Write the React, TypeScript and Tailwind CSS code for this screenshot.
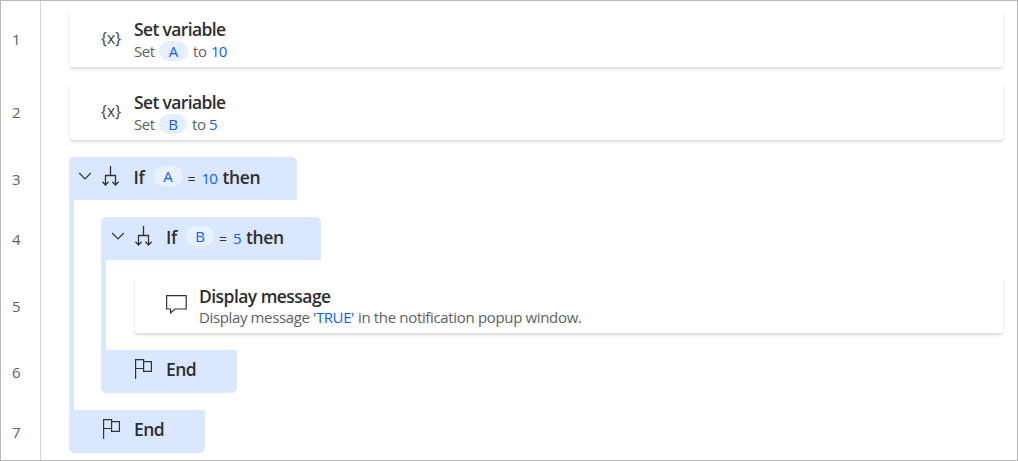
import type { ReactNode } from 'react';

const LineNumber = ({ n, className }: { n: number; className: string }) => (
  <div className={`flex items-center pb-[2px] pl-[11px] text-[15px] leading-none tracking-[-0.4px] text-[#5f5f5f] ${className}`}>{n}</div>
);

const Pill = ({ children, className }: { children: ReactNode; className: string }) => (
  <span className={`flex h-[20px] shrink-0 items-center justify-center rounded-full pt-px text-[15px] leading-none text-[#0b60fa] ${className}`}>
    {children}
  </span>
);

const Chevron = () => (
  <svg className="w-[14px] shrink-0" height="8" viewBox="0 0 14 8" fill="none" stroke="#333" strokeWidth="1.2">
    <path d="M1.2 1 7 6.8 12.8 1" />
  </svg>
);

const Branch = () => (
  <svg className="ml-[10px] w-[18px] shrink-0" height="20" viewBox="0 0 18 20" fill="none" stroke="#333" strokeWidth="1.3">
    <path d="M8.5 0V9.5M3.5 18.5V9.5H13.5V18.5M.4 15.8 3.5 19 6.6 15.8M10.4 15.8 13.5 19 16.6 15.8" />
  </svg>
);

const Flag = () => (
  <svg className="w-[18px] shrink-0" height="20" viewBox="0 0 18 20" fill="none" stroke="#333" strokeWidth="1.2">
    <path d="M.6 20V.6H8.6V9.5H.6M8.6 2.6H16.4V12.4H8.6V9.5" />
  </svg>
);

const Message = () => (
  <svg className="ml-[31px] w-[21px] shrink-0" height="19" viewBox="0 0 21 19" fill="none" stroke="#333" strokeWidth="1.2">
    <path d="M.6.7H20.2V14H9L4.6 17.9V14H.6Z" />
  </svg>
);

const Card = ({ icon, title, children, className }: { icon: ReactNode; title: ReactNode; children: ReactNode; className: string }) => (
  <div className={`flex h-[57px] shrink-0 rounded-[3px] bg-white shadow-[0_2px_3px_rgba(0,0,0,0.14)] ${className}`}>
    <div className="flex w-[64px] shrink-0 items-center">{icon}</div>
    <div className="flex flex-col pt-[9px]">
      <div className="h-[22px] text-[17.5px] leading-[22px] font-semibold whitespace-nowrap text-[#2e2e2e]">{title}</div>
      <div className="flex h-[20px] items-center text-[15px] leading-[20px] whitespace-nowrap text-[#616161]">{children}</div>
    </div>
  </div>
);

const Variable = () => <span className="ml-[31px] text-[15.5px] tracking-[0.1px] text-[#3b3b3b]">{'{x}'}</span>;

const SetCard = ({ name, value, wide, className }: { name: string; value: string; wide: boolean; className: string }) => (
  <Card className={className} icon={<Variable />} title={<span className="block leading-[20px] tracking-[-0.65px]">Set variable</span>}>
    <span className="w-[25px] tracking-[-0.4px]">Set</span>
    <Pill className={`bg-[#e5efff] ${wide ? 'w-[29px]' : 'w-[28px]'}`}>{name}</Pill>
    <span className={`ml-[5px] tracking-[-0.4px] ${wide ? 'w-[18px]' : 'w-[17px]'}`}>to</span>
    <span className="tracking-[-0.8px] text-[#0b60fa]">{value}</span>
  </Card>
);

const Condition = ({ name, value, wide, className }: { name: string; value: string; wide: boolean; className: string }) => (
  <div className={`flex h-[43px] items-center rounded-t-[5px] rounded-br-[2px] bg-[#dae8ff] pb-[5px] text-[#2e2e2e] ${className}`}>
    <Chevron />
    <Branch />
    <span className="ml-[13.5px] w-[20px] shrink-0 pt-px text-[17.5px] leading-[24px] font-semibold tracking-[-0.4px]">If</span>
    <Pill className={`bg-[#e8f1ff] ${wide ? 'w-[29px]' : 'w-[28px]'}`}>{name}</Pill>
    <span className="ml-[5px] flex w-[14px] shrink-0 pt-[5px] text-[14px] leading-[24px]">=</span>
    <span className={`shrink-0 pt-[4px] text-[15px] leading-[24px] tracking-[-0.8px] text-[#0b60fa] ${wide ? 'w-[21px]' : 'w-[13px]'}`}>{value}</span>
    <span className="pt-px text-[17.5px] leading-[24px] font-semibold tracking-[-0.4px]">then</span>
  </div>
);

const EndBlock = () => (
  <div className="flex h-[43px] w-[136px] shrink-0 items-center rounded-b-[5px] rounded-tr-[1px] bg-[#dae8ff] pb-[5px] pl-[34px]">
    <Flag />
    <span className="ml-[13px] pb-px text-[17.5px] leading-[24px] font-semibold tracking-[-0.6px] text-[#2e2e2e]">End</span>
  </div>
);

export default function App() {
  return (
    <div className="flex h-[461px] w-[1018px] overflow-hidden border border-[#b8b8b8] bg-white font-['Open_Sans','Noto_Sans',sans-serif]">
      <div className="flex w-[40px] shrink-0 flex-col border-r border-[#d6d6d6] pt-[9px]">
        <LineNumber n={1} className="h-[60px]" />
        <LineNumber n={2} className="mt-[13px] h-[60px]" />
        <LineNumber n={3} className="mt-[16px] h-[43px]" />
        <LineNumber n={4} className="mt-[17px] h-[43px]" />
        <LineNumber n={5} className="mt-[17px] h-[57px]" />
        <LineNumber n={6} className="mt-[16px] h-[43px]" />
        <LineNumber n={7} className="mt-[17px] h-[43px]" />
      </div>
      <div className="flex flex-1 flex-col pt-[9px] pr-[14px] pl-[28px]">
        <SetCard className="ml-px" name="A" value="10" wide />
        <SetCard className="mt-[16px] ml-px" name="B" value="5" wide={false} />
        <div className="mt-[17px] flex flex-col">
          <Condition className="w-[228px] pl-[9px]" name="A" value="10" wide />
          <div className="flex h-[210px] flex-col border-l-[5px] border-[#dae8ff] pt-[17px]">
            <div className="ml-[27px] flex flex-col">
              <Condition className="w-[220px] pl-[9.5px]" name="B" value="5" wide={false} />
              <div className="flex h-[90px] flex-col border-l-[5px] border-[#dae8ff] pt-[16px] pl-[29px]">
                <Card className="" icon={<Message />} title={<span className="tracking-[-0.55px]">Display message</span>}>
                  <span className="w-[114px] tracking-[-0.37px]">Display message</span>
                  <span className="w-[45px] tracking-[-0.4px] text-[#0b60fa]">'TRUE'</span>
                  <span className="tracking-[-0.34px]">in the notification popup window.</span>
                </Card>
              </div>
              <EndBlock />
            </div>
          </div>
          <EndBlock />
        </div>
      </div>
    </div>
  );
}
